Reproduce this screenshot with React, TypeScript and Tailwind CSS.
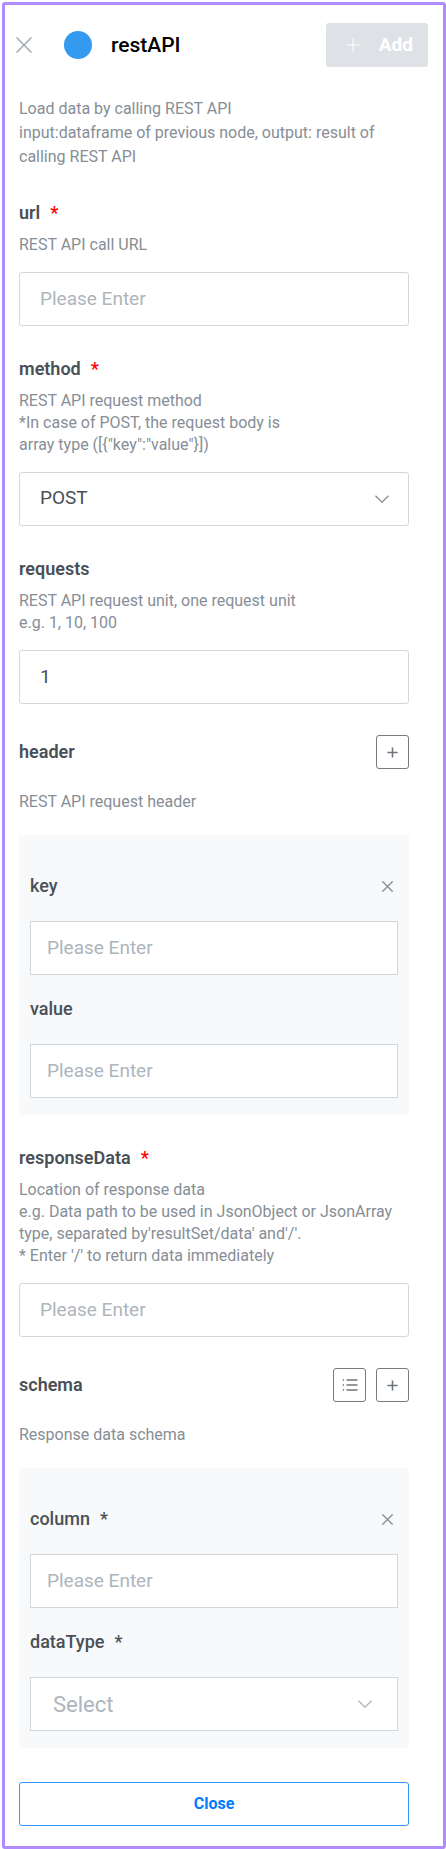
import { useState, type ReactNode } from "react";

const inputBase =
  "block h-[54px] w-full border border-[#d3d8dd] bg-white pb-0.5 text-[19px] text-[#495057] outline-none placeholder:text-[#adb5bd] placeholder:opacity-100";

function PlusIcon({ className }: { className: string }) {
  return (
    <svg className={className} viewBox="0 0 14 14" fill="none" stroke="currentColor" aria-hidden="true">
      <path d="M7 .5v13M.5 7h13" />
    </svg>
  );
}

function CrossIcon({ className }: { className: string }) {
  return (
    <svg className={className} viewBox="0 0 16 16" fill="none" stroke="currentColor" aria-hidden="true">
      <path d="M.5.5l15 15M15.5.5l-15 15" />
    </svg>
  );
}

function ListIcon() {
  return (
    <svg className="h-4 w-4" viewBox="0 0 16 16" fill="none" stroke="currentColor" strokeWidth="1.3" aria-hidden="true">
      <path d="M4.5 3h11M4.5 8h11M4.5 13h11M.7 3h1.3M.7 8h1.3M.7 13h1.3" />
    </svg>
  );
}

function Chevron({ className }: { className: string }) {
  return (
    <svg
      className={`pointer-events-none absolute top-1/2 h-2 w-3.5 -translate-y-1/2 ${className}`}
      viewBox="0 0 14 8"
      fill="none"
      stroke="currentColor"
      strokeWidth="1.3"
      aria-hidden="true"
    >
      <path d="M.5.7L7 7.2 13.5.7" />
    </svg>
  );
}

function FieldLabel({ htmlFor, required, children }: { htmlFor: string; required?: boolean; children: ReactNode }) {
  return (
    <label htmlFor={htmlFor} className="flex gap-2.5 text-lg leading-6 font-semibold text-[#495057]">
      {children}
      {required && <span className="text-[#ff0000]">*</span>}
    </label>
  );
}

function Hint({ children }: { children: ReactNode }) {
  return <p className="text-base leading-[22px] whitespace-pre-line text-[#868e96]">{children}</p>;
}

function Field({
  id,
  label,
  required,
  hint,
  children,
}: {
  id: string;
  label: string;
  required?: boolean;
  hint: string;
  children: ReactNode;
}) {
  return (
    <div>
      <FieldLabel htmlFor={id} required={required}>
        {label}
      </FieldLabel>
      <div className="mt-[9px] mb-4">
        <Hint>{hint}</Hint>
      </div>
      {children}
    </div>
  );
}

function GroupHeader({ title, hint, children }: { title: string; hint: string; children: ReactNode }) {
  return (
    <>
      <div className="flex h-[34px] items-center justify-between">
        <h2 className="text-lg leading-6 font-semibold text-[#495057]">{title}</h2>
        <div className="flex gap-2.5">{children}</div>
      </div>
      <div className="my-[22px]">
        <Hint>{hint}</Hint>
      </div>
    </>
  );
}

function SquareButton({ label, children }: { label: string; children: ReactNode }) {
  return (
    <button
      type="button"
      aria-label={label}
      className="flex h-[34px] w-[33px] items-center justify-center rounded-[3px] border border-[#747b82] text-[#6c757d]"
    >
      {children}
    </button>
  );
}

function SubField({
  id,
  label,
  required,
  removable,
  children,
}: {
  id: string;
  label: string;
  required?: boolean;
  removable?: boolean;
  children: ReactNode;
}) {
  return (
    <div>
      <div className="mb-[23px] flex items-center justify-between pr-[5px]">
        <label htmlFor={id} className="flex gap-2.5 text-lg leading-6 font-medium text-[#495057]">
          {label}
          {required && <span>*</span>}
        </label>
        {removable && (
          <button type="button" aria-label={`Remove ${label}`} className="text-[#868e96]">
            <CrossIcon className="h-[11px] w-[11px] stroke-2" />
          </button>
        )}
      </div>
      {children}
    </div>
  );
}

function Panel({ children }: { children: ReactNode }) {
  return <div className="flex flex-col gap-[22px] bg-[#f8f9fa] px-[11px] pt-[39px] pb-[17px]">{children}</div>;
}

export default function App() {
  const [method, setMethod] = useState("POST");
  const [dataType, setDataType] = useState("");
  const [requests, setRequests] = useState("1");

  return (
    <div className="bg-white pt-0.5 pl-0.5 font-[Roboto,sans-serif]">
      <main className="rounded-[3px] border-[3px] border-[#b18cff] pb-5">
        <header className="flex h-20 items-center pr-[15px] pl-[11px]">
          <button type="button" aria-label="Close panel" className="text-[#a3abb3]">
            <CrossIcon className="h-4 w-4 stroke-[1.5]" />
          </button>
          <span className="ml-8 h-7 w-7 rounded-full bg-[#339af0]" />
          <h1 className="ml-[19px] text-[21px] leading-8 font-medium text-black">restAPI</h1>
          <button
            type="button"
            disabled
            className="ml-auto flex h-11 w-[102px] items-center justify-between rounded-[3px] bg-[#dee2e6] pr-[15px] pl-5 text-[19px] font-bold text-white"
          >
            <PlusIcon className="h-3.5 w-3.5" />
            Add
          </button>
        </header>

        <form className="pr-[34px] pl-[14px]" onSubmit={(e) => e.preventDefault()}>
          <p className="mt-3 mb-8 text-base leading-6 whitespace-pre-line text-[#868e96]">
            {"Load data by calling REST API\ninput:dataframe of previous node, output: result of calling REST API"}
          </p>

          <div className="flex flex-col gap-[31px]">
            <Field id="url" label="url" required hint="REST API call URL">
              <input id="url" type="text" placeholder="Please Enter" className={`${inputBase} rounded-[3px] px-5`} />
            </Field>

            <Field
              id="method"
              label="method"
              required
              hint={'REST API request method\n*In case of POST, the request body is\narray type ([{"key":"value"}])'}
            >
              <div className="relative">
                <select
                  id="method"
                  value={method}
                  onChange={(e) => setMethod(e.target.value)}
                  className={`${inputBase} appearance-none rounded-[3px] px-5`}
                >
                  <option>POST</option>
                  <option>GET</option>
                </select>
                <Chevron className="right-5 text-[#868e96]" />
              </div>
            </Field>

            <Field id="requests" label="requests" hint={"REST API request unit, one request unit\ne.g. 1, 10, 100"}>
              <input
                id="requests"
                type="text"
                value={requests}
                onChange={(e) => setRequests(e.target.value)}
                className={`${inputBase} rounded-[3px] px-5`}
              />
            </Field>

            <section>
              <GroupHeader title="header" hint="REST API request header">
                <SquareButton label="Add header">
                  <PlusIcon className="h-[11px] w-[11px] stroke-2" />
                </SquareButton>
              </GroupHeader>
              <Panel>
                <SubField id="key" label="key" removable>
                  <input id="key" type="text" placeholder="Please Enter" className={`${inputBase} px-4`} />
                </SubField>
                <SubField id="value" label="value">
                  <input id="value" type="text" placeholder="Please Enter" className={`${inputBase} px-4`} />
                </SubField>
              </Panel>
            </section>

            <Field
              id="responseData"
              label="responseData"
              required
              hint={
                "Location of response data\ne.g. Data path to be used in JsonObject or JsonArray type, separated by'resultSet/data' and'/'.\n* Enter '/' to return data immediately"
              }
            >
              <input
                id="responseData"
                type="text"
                placeholder="Please Enter"
                className={`${inputBase} rounded-[3px] px-5`}
              />
            </Field>

            <section>
              <GroupHeader title="schema" hint="Response data schema">
                <SquareButton label="Edit schema as list">
                  <ListIcon />
                </SquareButton>
                <SquareButton label="Add column">
                  <PlusIcon className="h-[11px] w-[11px] stroke-2" />
                </SquareButton>
              </GroupHeader>
              <Panel>
                <SubField id="column" label="column" required removable>
                  <input id="column" type="text" placeholder="Please Enter" className={`${inputBase} px-4`} />
                </SubField>
                <SubField id="dataType" label="dataType" required>
                  <div className="relative">
                    <select
                      id="dataType"
                      value={dataType}
                      onChange={(e) => setDataType(e.target.value)}
                      className="block h-[54px] w-full appearance-none border border-[#d3d8dd] bg-white px-[22px] text-[22px] text-[#adb5bd] outline-none"
                    >
                      <option value="">Select</option>
                      <option>String</option>
                      <option>Number</option>
                    </select>
                    <Chevron className="right-[26px] text-[#adb5bd]" />
                  </div>
                </SubField>
              </Panel>
              <button
                type="button"
                className="mt-[34px] h-11 w-full rounded-[3px] border border-[#3395ff] bg-white text-base font-bold text-[#007bff]"
              >
                Close
              </button>
            </section>
          </div>
        </form>
      </main>
    </div>
  );
}
